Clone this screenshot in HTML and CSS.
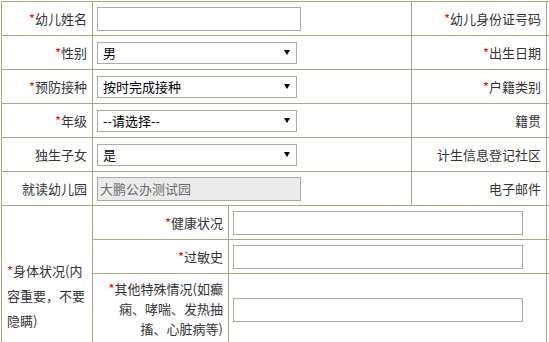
FILE: index.html
```html
<!DOCTYPE html>
<html lang="zh-CN">
<head>
    <meta charset="UTF-8">
    <title>幼儿信息登记</title>
    <link rel="stylesheet" href="styles.css">
</head>
<body>
    <table class="form-table">
        <colgroup>
            <col class="col-a">
            <col class="col-b">
            <col class="col-c">
            <col class="col-d">
            <col class="col-e">
        </colgroup>
        <tr>
            <td class="label"><span class="req">*</span>幼儿姓名</td>
            <td class="field" colspan="2"><input type="text" class="text-input"></td>
            <td class="label"><span class="req">*</span>幼儿身份证号码</td>
            <td class="field"></td>
        </tr>
        <tr>
            <td class="label"><span class="req">*</span>性别</td>
            <td class="field" colspan="2">
                <span class="select-box"><select><option>男</option><option>女</option></select></span>
            </td>
            <td class="label"><span class="req">*</span>出生日期</td>
            <td class="field"></td>
        </tr>
        <tr>
            <td class="label"><span class="req">*</span>预防接种</td>
            <td class="field" colspan="2">
                <span class="select-box"><select><option>按时完成接种</option></select></span>
            </td>
            <td class="label"><span class="req">*</span>户籍类别</td>
            <td class="field"></td>
        </tr>
        <tr>
            <td class="label"><span class="req">*</span>年级</td>
            <td class="field" colspan="2">
                <span class="select-box"><select><option>--请选择--</option></select></span>
            </td>
            <td class="label">籍贯</td>
            <td class="field"></td>
        </tr>
        <tr>
            <td class="label">独生子女</td>
            <td class="field" colspan="2">
                <span class="select-box"><select><option>是</option><option>否</option></select></span>
            </td>
            <td class="label">计生信息登记社区</td>
            <td class="field"></td>
        </tr>
        <tr>
            <td class="label">就读幼儿园</td>
            <td class="field" colspan="2"><input type="text" class="text-input" value="大鹏公办测试园" disabled></td>
            <td class="label">电子邮件</td>
            <td class="field"></td>
        </tr>
        <tr>
            <td class="label body-label" rowspan="3"><span class="req">*</span>身体状况(内容重要，不要隐瞒)</td>
            <td class="label"><span class="req">*</span>健康状况</td>
            <td class="field" colspan="2"><input type="text" class="text-input wide"></td>
            <td class="field"></td>
        </tr>
        <tr>
            <td class="label"><span class="req">*</span>过敏史</td>
            <td class="field" colspan="2"><input type="text" class="text-input wide"></td>
            <td class="field"></td>
        </tr>
        <tr class="tall-row">
            <td class="label multi"><span class="req">*</span>其他特殊情况(如癫痫、哮喘、发热抽搐、心脏病等)</td>
            <td class="field" colspan="2"><input type="text" class="text-input wide"></td>
            <td class="field"></td>
        </tr>
    </table>
</body>
</html>
```

FILE: styles.css
```css
html, body {
    margin: 0;
    overflow: hidden;
    background-color: #ffffff;
}
body {
    font-family: "Noto Sans CJK SC", sans-serif;
    font-size: 13px;
    color: #333333;
    padding: 1px 0 0 1px;
}
.form-table {
    border-collapse: collapse;
    table-layout: fixed;
    width: 745px;
}
.col-a { width: 91px; }
.col-b { width: 136px; }
.col-c { width: 183px; }
.col-d { width: 135px; }
.col-e { width: 200px; }
.form-table td {
    border: 1px solid #ada58a;
    height: 33px;
    padding: 0 5px;
    line-height: 20px;
    vertical-align: middle;
}
.form-table td.field {
    padding: 0 4px;
}
.label {
    text-align: right;
    white-space: normal;
}
.req {
    color: #ff0000;
}
.body-label {
    text-align: left;
    line-height: 25px !important;
    vertical-align: top !important;
    padding-top: 52px !important;
}
.tall-row td {
    padding-top: 5px;
    padding-bottom: 6px;
}
.text-input {
    box-sizing: border-box;
    width: 204px;
    height: 24px;
    border: 1px solid #a9a9a9;
    padding: 0 2px;
    margin: 0;
    font-family: inherit;
    font-size: 13px;
    color: #000000;
    display: block;
}
.text-input:disabled {
    background-color: #ebebeb;
    color: #6d6d6d;
}
.text-input.wide {
    width: 290px;
}
.select-box {
    position: relative;
    display: block;
    width: 200px;
}
.select-box select {
    -webkit-appearance: none;
    appearance: none;
    box-sizing: border-box;
    width: 200px;
    height: 22px;
    border: 1px solid #a9a9a9;
    border-radius: 0;
    background-color: #ffffff;
    padding: 0 0 0 5px;
    margin: 0;
    font-family: inherit;
    font-size: 13px;
    color: #000000;
    display: block;
}
.select-box::after {
    content: "";
    position: absolute;
    right: 7px;
    top: 8px;
    width: 0;
    height: 0;
    border-left: 3px solid transparent;
    border-right: 3px solid transparent;
    border-top: 5px solid #000000;
    pointer-events: none;
}
```
